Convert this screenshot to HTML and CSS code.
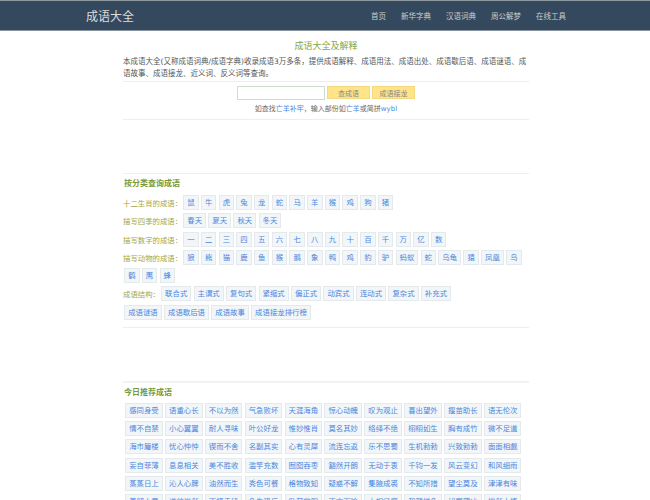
FILE: index.html
```html
<!DOCTYPE html>
<html lang="zh-CN">
<head>
<meta charset="utf-8">
<title>成语大全</title>
<link rel="stylesheet" href="styles.css">
</head>
<body>
<header class="topbar">
  <div class="topbar-inner">
    <a class="brand">成语大全</a>
    <nav class="nav"><a>首页</a><a>新华字典</a><a>汉语词典</a><a>周公解梦</a><a>在线工具</a></nav>
  </div>
</header>
<main class="page">
  <h1 class="title">成语大全及解释</h1>
  <p class="intro">本成语大全(又称成语词典/成语字典)收录成语3万多条，提供成语解释、成语用法、成语出处、成语歇后语、成语谜语、成语故事、成语接龙、近义词、反义词等查询。</p>
  <section class="search">
    <form class="search-row"><input class="search-input" type="text"><button class="btn" type="button">查成语</button><button class="btn" type="button">成语接龙</button></form>
    <p class="hint">如查找<a>亡羊补牢</a>，输入部份如<a>亡羊</a>或简拼<a>wybl</a></p>
  </section>
  <section class="category">
    <h2 class="heading">按分类查询成语</h2>
    <div class="tags"><span class="label">十二生肖的成语：</span><a>鼠</a><a>牛</a><a>虎</a><a>兔</a><a>龙</a><a>蛇</a><a>马</a><a>羊</a><a>猴</a><a>鸡</a><a>狗</a><a>猪</a></div>
    <div class="tags"><span class="label">描写四季的成语：</span><a>春天</a><a>夏天</a><a>秋天</a><a>冬天</a></div>
    <div class="tags"><span class="label">描写数字的成语：</span><a>一</a><a>二</a><a>三</a><a>四</a><a>五</a><a>六</a><a>七</a><a>八</a><a>九</a><a>十</a><a>百</a><a>千</a><a>万</a><a>亿</a><a>数</a></div>
    <div class="tags"><span class="label">描写动物的成语：</span><a>狼</a><a>熊</a><a>猫</a><a>鹿</a><a>鱼</a><a>猴</a><a>鹅</a><a>象</a><a>鸭</a><a>鸡</a><a>豹</a><a>驴</a><a>蚂蚁</a><a>蛇</a><a>乌龟</a><a>猿</a><a>凤凰</a><a>鸟</a><a>鹤</a><a>鹰</a><a>蜂</a></div>
    <div class="tags"><span class="label">成语结构：</span><a>联合式</a><a>主谓式</a><a>复句式</a><a>紧缩式</a><a>偏正式</a><a>动宾式</a><a>连动式</a><a>复杂式</a><a>补充式</a></div>
    <div class="tags"><a>成语谜语</a><a>成语歇后语</a><a>成语故事</a><a>成语接龙排行榜</a></div>
  </section>
  <section class="today">
    <h2 class="heading">今日推荐成语</h2>
    <div class="tags wide"><a>感同身受</a><a>语重心长</a><a>不以为然</a><a>气急败坏</a><a>天涯海角</a><a>惊心动魄</a><a>叹为观止</a><a>喜出望外</a><a>揠苗助长</a><a>语无伦次</a><a>情不自禁</a><a>小心翼翼</a><a>耐人寻味</a><a>叶公好龙</a><a>惟妙惟肖</a><a>莫名其妙</a><a>络绎不绝</a><a>栩栩如生</a><a>胸有成竹</a><a>微不足道</a><a>海市蜃楼</a><a>忧心忡忡</a><a>锲而不舍</a><a>名副其实</a><a>心有灵犀</a><a>流连忘返</a><a>乐不思蜀</a><a>生机勃勃</a><a>兴致勃勃</a><a>面面相觑</a><a>妄自菲薄</a><a>息息相关</a><a>美不胜收</a><a>滥竽充数</a><a>囫囵吞枣</a><a>豁然开朗</a><a>无动于衷</a><a>千钧一发</a><a>风云变幻</a><a>和风细雨</a><a>蒸蒸日上</a><a>沁人心脾</a><a>油然而生</a><a>秀色可餐</a><a>格物致知</a><a>疑惑不解</a><a>集腋成裘</a><a>不知所措</a><a>望尘莫及</a><a>津津有味</a><a>善解人意</a><a>道貌岸然</a><a>不择手段</a><a>争先恐后</a><a>卧薪尝胆</a><a>不言而喻</a><a>大相径庭</a><a>和颜悦色</a><a>如履薄冰</a><a>恍然大悟</a></div>
  </section>
</main>
</body>
</html>
```
FILE: styles.css
```css
* { box-sizing: border-box; }
html, body { margin: 0; padding: 0; }
body {
  height: 500px;
  overflow: hidden;
  background: #fff;
  color: #555;
  font-family: "DejaVu Sans", "Noto Sans CJK SC", sans-serif;
  font-size: 8px;
}
.topbar {
  height: 31px;
  background: #34495e;
  border-top: 1px solid #8f9aa0;
  border-bottom: 1px solid #8895a0;
}
.topbar-inner {
  width: 482px;
  margin: 0 auto;
  padding-left: 2px;
  height: 29px;
  display: flex;
  justify-content: space-between;
  align-items: center;
}
.brand { color: #ddd; font-size: 12px; }
.nav { display: flex; gap: 15px; color: #ccc; font-size: 7.5px; }
.page { margin: 0 121px 0 123px; }
.title {
  margin: 9px 0 0;
  text-align: center;
  color: #8aa63d;
  font-size: 9px;
  font-weight: normal;
  line-height: 12px;
}
.intro {
  margin: 4px 0 0;
  font-size: 7.5px;
  line-height: 12px;
  padding-bottom: 1px;
  border-bottom: 1px solid #eee;
}
.search {
  height: 38px;
  padding-top: 4px;
  border-bottom: 1px solid #eee;
  text-align: center;
}
.search-row { display: flex; justify-content: center; gap: 2px; height: 14px; }
.search-input {
  width: 88px;
  height: 14px;
  border: 1px solid #cfdccf;
  background: #fff;
  padding: 0;
}
.btn {
  width: 43px;
  height: 13px;
  padding: 0;
  background: #ffe48a;
  border: 1px solid #f5d77e;
  color: #888;
  font: 7px "DejaVu Sans", "Noto Sans CJK SC", sans-serif;
}
.hint { margin: 4px 0 0; font-size: 7px; line-height: 10px; color: #666; }
.hint a { color: #4a86dd; }
.category {
  margin-top: 53px;
  padding-bottom: 3.8px;
  border-top: 1px solid #eee;
  border-bottom: 1px solid #eee;
}
.heading {
  margin: 0;
  padding: 4px 0 0 1px;
  height: 21px;
  color: #7a9a34;
  font-size: 8px;
  line-height: 12px;
  font-weight: bold;
}
.tags { display: flex; flex-wrap: wrap; row-gap: 3.3px; margin-bottom: 3.3px; align-items: center; }
.tags a {
  height: 15px;
  margin: 0 1.15px;
  padding: 0 3px;
  line-height: 13px;
  font-size: 7.4px;
  color: #4a86dd;
  background: #f3f6f8;
  border: 1px solid #e4e9ec;
}
.label { color: #a0a84a; font-size: 7.4px; }
.today { margin-top: 53px; border-top: 2px solid #f2f2f2; }
.today .heading { height: 20px; }
.wide { padding-left: 1px; }
```
